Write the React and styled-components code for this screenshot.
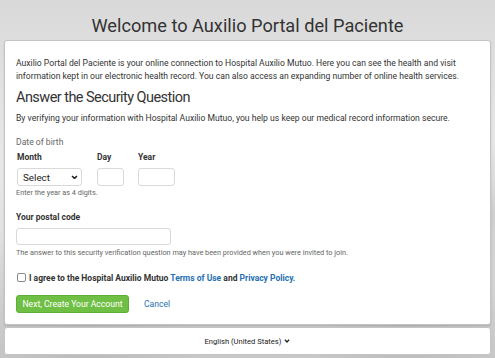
import React from 'react';
import styled, { createGlobalStyle } from 'styled-components';

const GlobalStyle = createGlobalStyle`
  html, body { margin: 0; padding: 0; }
  body {
    font-family: Roboto, "Liberation Sans", Arial, sans-serif;
    color: #333;
  }
`;

const Page = styled.div`
  width: 495px;
  height: 358px;
  overflow: hidden;
  box-sizing: border-box;
  padding: 0 4px;
  display: flex;
  flex-direction: column;
  background:
    radial-gradient(ellipse at 18% 97%, rgba(140, 140, 140, 0.35), transparent 40%),
    radial-gradient(ellipse at 82% 94%, rgba(130, 130, 130, 0.3), transparent 35%),
    radial-gradient(ellipse at 98% 60%, rgba(150, 150, 150, 0.3), transparent 25%),
    linear-gradient(180deg, #d9d9d9 0%, #e4e4e4 30%, #ececec 65%, #d4d4d4 100%);
`;

const Title = styled.h1`
  margin: 0;
  height: 40px;
  flex: none;
  line-height: 51px;
  text-align: center;
  font-size: 18.2px;
  font-weight: 400;
  color: #333;
  white-space: nowrap;
`;

const Card = styled.div`
  flex: none;
  background: #fff;
  border: 1px solid #c4c4c4;
  border-radius: 3px;
  box-shadow: 0 1px 2px rgba(0, 0, 0, 0.15);
  padding: 16px 11px 0;
  height: 285px;
  box-sizing: border-box;
`;

const Text = styled.p`
  margin: ${p => p.$top || 0}px 0 0;
  font-size: 8.6px;
  line-height: 13px;
  color: ${p => p.$muted ? '#666' : '#333'};
  white-space: ${p => p.$nowrap ? 'nowrap' : 'normal'};
`;

const Heading = styled.h2`
  margin: 5px 0 0;
  font-size: 14.5px;
  letter-spacing: -0.55px;
  font-weight: 400;
  line-height: 20px;
  color: #333;
`;

const DateRow = styled.div`
  display: flex;
  margin-top: 2px;
  padding-left: 1px;
`;

const Field = styled.div`
  display: flex;
  flex-direction: column;
  width: ${p => p.$w}px;
`;

const Label = styled.div`
  margin-top: ${p => p.$top || 0}px;
  font-size: 8.5px;
  font-weight: 700;
  line-height: 13px;
  color: #333;
`;

const Box = styled.div`
  margin-top: 4px;
  box-sizing: border-box;
  width: ${p => p.$w}px;
  height: ${p => p.$h || 18}px;
  border: 1px solid #d9d9d9;
  border-radius: 3px;
  background: #fff;
  display: flex;
  align-items: center;
  justify-content: space-between;
  padding: 0 3px 0 5px;
  font-size: 9.8px;
  color: #222;
`;

const Hint = styled.div`
  margin-top: ${p => p.$top || 3}px;
  font-size: 7.3px;
  line-height: 10px;
  color: #666;
`;

const Agree = styled.div`
  margin-top: 13px;
  height: 13px;
  display: flex;
  align-items: center;
  gap: 3px;
  font-size: 8.5px;
  font-weight: 700;
  color: #333;
  white-space: nowrap;
`;

const Check = styled.span`
  box-sizing: border-box;
  width: 9px;
  height: 9px;
  border: 1px solid #8a8a8a;
  border-radius: 2px;
  background: #fff;
  margin-left: 1px;
`;

const Link = styled.a`
  color: #1f6fb2;
  text-decoration: none;
`;

const Actions = styled.div`
  margin-top: 11px;
  display: flex;
  align-items: center;
  gap: 15px;
`;

const Primary = styled.button`
  height: 18px;
  width: 113px;
  padding: 0;
  border: 1px solid #5fac36;
  border-radius: 3px;
  background: #6fbf45;
  color: #fff;
  font-family: inherit;
  font-size: 8.6px;
`;

const Cancel = styled(Link)`
  font-size: 8.6px;
`;

const Footer = styled.div`
  flex: none;
  margin-top: 2px;
  height: 28px;
  background: #fff;
  border: 1px solid #c4c4c4;
  border-radius: 3px;
  box-sizing: border-box;
  display: flex;
  align-items: center;
  justify-content: center;
  gap: 3px;
  font-size: 7.6px;
  color: #222;
`;

const Chevron = ({ w = 7 }) => (
  <svg width={w} height={w * 0.7} viewBox="0 0 7 5">
    <path d="M1 1 L3.5 3.5 L6 1" fill="none" stroke="#222" strokeWidth="1.6" />
  </svg>
);

export default function App() {
  return (
    <Page>
      <GlobalStyle />
      <Title>Welcome to Auxilio Portal del Paciente</Title>
      <Card>
        <Text>
          Auxilio Portal del Paciente is your online connection to Hospital Auxilio Mutuo. Here you can see the health and visit
          information kept in our electronic health record. You can also access an expanding number of online health services.
        </Text>
        <Heading>Answer the Security Question</Heading>
        <Text $top={4} $nowrap>
          By verifying your information with Hospital Auxilio Mutuo, you help us keep our medical record information secure.
        </Text>
        <Text $top={11} $muted>Date of birth</Text>
        <DateRow>
          <Field $w={80}>
            <Label>Month</Label>
            <Box $w={65}>Select <Chevron w={7} /></Box>
          </Field>
          <Field $w={41}>
            <Label>Day</Label>
            <Box $w={27} />
          </Field>
          <Field $w={40}>
            <Label>Year</Label>
            <Box $w={37} />
          </Field>
        </DateRow>
        <Hint $top={2}>Enter the year as 4 digits.</Hint>
        <Label $top={13}>Your postal code</Label>
        <Box $w={155} $h={17} />
        <Hint $top={3}>The answer to this security verification question may have been provided when you were invited to join.</Hint>
        <Agree>
          <Check />
          <span>
            I agree to the Hospital Auxilio Mutuo <Link href="#">Terms of Use</Link> and <Link href="#">Privacy Policy.</Link>
          </span>
        </Agree>
        <Actions>
          <Primary>Next, Create Your Account</Primary>
          <Cancel href="#">Cancel</Cancel>
        </Actions>
      </Card>
      <Footer>
        English (United States) <Chevron w={6} />
      </Footer>
    </Page>
  );
}
